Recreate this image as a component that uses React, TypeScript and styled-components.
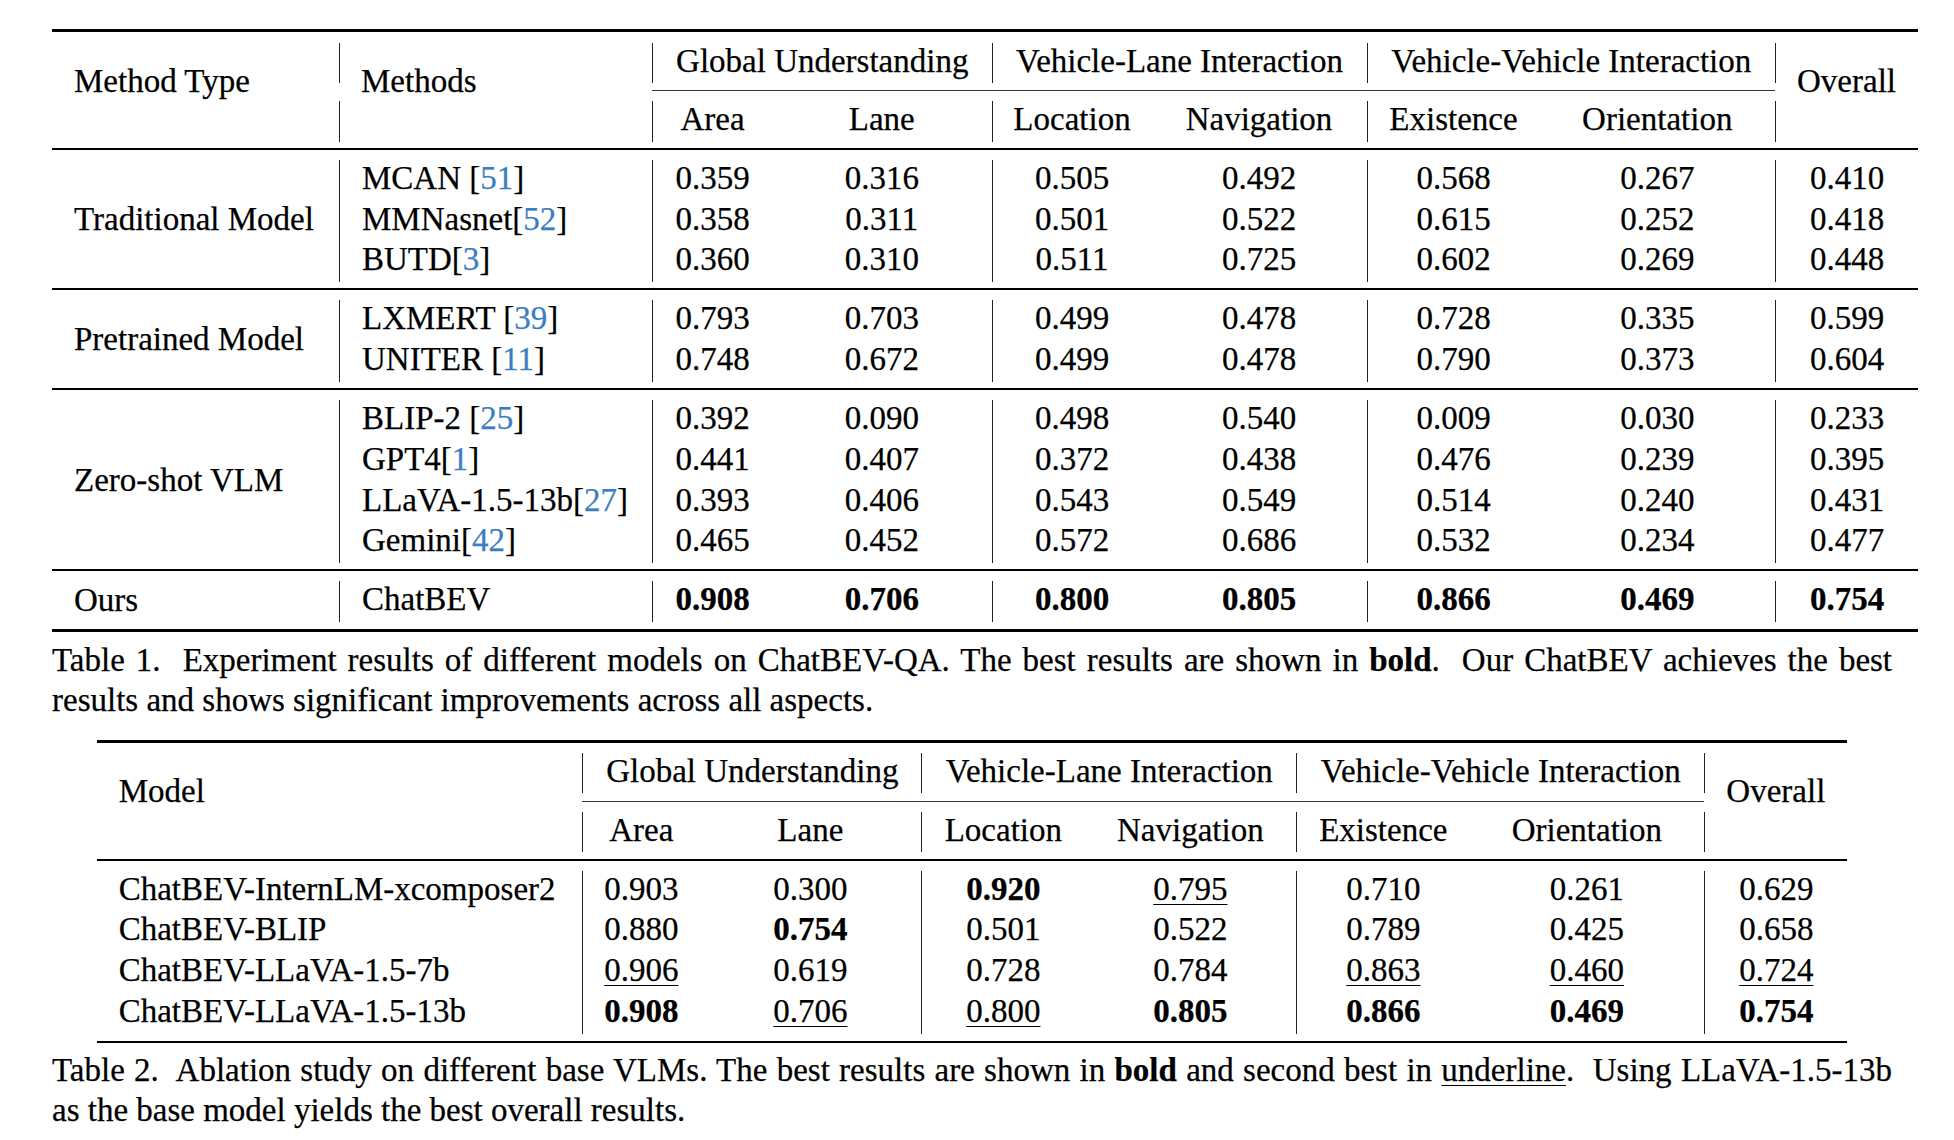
import React from 'react'
import styled, { createGlobalStyle } from 'styled-components'

const GlobalStyle = createGlobalStyle`
  html, body {
    margin: 0;
    padding: 0;
    background: #fff;
  }
  body {
    font-family: 'Liberation Serif', 'Times New Roman', Times, serif;
    font-size: 33px;
    color: #000;
    -webkit-text-stroke: 0.25px currentColor;
  }
`

const Page = styled.div`
  width: 1954px;
  box-sizing: border-box;
  padding: 29.3px 0 0 52px;
`

const TextColumn = styled.div`
  width: 1840px;
  display: flex;
  flex-direction: column;
`

const TableBox = styled.div<{ $width: number; $centered?: boolean; $gap: number }>`
  width: ${p => p.$width}px;
  display: flex;
  flex-direction: column;
  margin-top: ${p => p.$gap}px;
  align-self: ${p => (p.$centered ? 'center' : 'flex-start')};
`

const Rule = styled.div<{ $kind: 'top' | 'mid' | 'bottom' }>`
  height: ${p => (p.$kind === 'mid' ? 2 : 2.7)}px;
  background: #000;
  margin-top: ${p => (p.$kind === 'top' ? 0 : p.$kind === 'mid' ? 6.2 : 7)}px;
  margin-bottom: ${p => (p.$kind === 'top' ? 10.7 : p.$kind === 'mid' ? 10.2 : 0)}px;
`

const Grid = styled.div<{ $cols: number[]; $rows: string }>`
  display: grid;
  grid-template-columns: ${p => p.$cols.map(c => `${c}px`).join(' ')};
  grid-template-rows: ${p => p.$rows};
`

const Cell = styled.div<{ $col: string; $row: string; $bar?: boolean; $left?: boolean }>`
  grid-column: ${p => p.$col};
  grid-row: ${p => p.$row};
  border-left: ${p => (p.$bar ? '1px solid #222' : 'none')};
  text-align: ${p => (p.$left ? 'left' : 'center')};
  padding-left: ${p => (p.$left ? '22px' : '0')};
  line-height: 36px;
  white-space: nowrap;
`

const SpanLabel = styled.div<{ $col: string; $row: string; $head?: boolean; $left?: boolean }>`
  grid-column: ${p => p.$col};
  grid-row: ${p => p.$row};
  align-self: ${p => (p.$head ? 'start' : 'center')};
  padding-top: ${p => (p.$head ? '20px' : '0')};
  margin-bottom: ${p => (p.$head ? '0' : '4px')};
  text-align: ${p => (p.$left ? 'left' : 'center')};
  padding-left: ${p => (p.$left ? '22px' : '0')};
  line-height: 36px;
  white-space: nowrap;
`

const CmidLine = styled.div<{ $col: string }>`
  grid-column: ${p => p.$col};
  grid-row: 2;
  align-self: start;
  margin-top: 7.2px;
  height: 1.2px;
  background: #333;
`

const Bold = styled.b`
  font-weight: 700;
`

const Under = styled.span`
  text-decoration: underline;
  text-decoration-thickness: 1.3px;
  text-underline-offset: 4px;
`

const Cite = styled.span`
  color: #3a7ebf;
`

const Caption = styled.div<{ $gap: number }>`
  width: 1840px;
  margin-top: ${p => p.$gap}px;
  line-height: 40px;
`

const CaptionLine = styled.div<{ $fill?: boolean }>`
  text-align: ${p => (p.$fill ? 'justify' : 'left')};
  text-align-last: ${p => (p.$fill ? 'justify' : 'auto')};
`

type Group = { title: string; subs: [string, string] }

type TableSpec = {
  widths: number[]
  leads: string[]
  groups: Group[]
  bars: number[]
}

type BodyGroup = { label?: string; rows: string[][] }

const groups: Group[] = [
  { title: 'Global Understanding', subs: ['Area', 'Lane'] },
  { title: 'Vehicle-Lane Interaction', subs: ['Location', 'Navigation'] },
  { title: 'Vehicle-Vehicle Interaction', subs: ['Existence', 'Orientation'] },
]

const table1: TableSpec = {
  widths: [287, 313, 120, 219.5, 160, 215, 173, 235.5, 143],
  leads: ['Method Type', 'Methods'],
  groups,
  bars: [2, 3, 5, 7, 9],
}

const table2: TableSpec = {
  widths: [485.7, 117, 222, 163, 212, 173, 235, 143],
  leads: ['Model'],
  groups,
  bars: [2, 4, 6, 8],
}

const body1: BodyGroup[] = [
  {
    label: 'Traditional Model',
    rows: [
      ['MCAN [51]', '0.359', '0.316', '0.505', '0.492', '0.568', '0.267', '0.410'],
      ['MMNasnet[52]', '0.358', '0.311', '0.501', '0.522', '0.615', '0.252', '0.418'],
      ['BUTD[3]', '0.360', '0.310', '0.511', '0.725', '0.602', '0.269', '0.448'],
    ],
  },
  {
    label: 'Pretrained Model',
    rows: [
      ['LXMERT [39]', '0.793', '0.703', '0.499', '0.478', '0.728', '0.335', '0.599'],
      ['UNITER [11]', '0.748', '0.672', '0.499', '0.478', '0.790', '0.373', '0.604'],
    ],
  },
  {
    label: 'Zero-shot VLM',
    rows: [
      ['BLIP-2 [25]', '0.392', '0.090', '0.498', '0.540', '0.009', '0.030', '0.233'],
      ['GPT4[1]', '0.441', '0.407', '0.372', '0.438', '0.476', '0.239', '0.395'],
      ['LLaVA-1.5-13b[27]', '0.393', '0.406', '0.543', '0.549', '0.514', '0.240', '0.431'],
      ['Gemini[42]', '0.465', '0.452', '0.572', '0.686', '0.532', '0.234', '0.477'],
    ],
  },
  {
    label: 'Ours',
    rows: [['ChatBEV', '**0.908**', '**0.706**', '**0.800**', '**0.805**', '**0.866**', '**0.469**', '**0.754**']],
  },
]

const body2: BodyGroup[] = [
  {
    rows: [
      ['ChatBEV-InternLM-xcomposer2', '0.903', '0.300', '**0.920**', '_0.795_', '0.710', '0.261', '0.629'],
      ['ChatBEV-BLIP', '0.880', '**0.754**', '0.501', '0.522', '0.789', '0.425', '0.658'],
      ['ChatBEV-LLaVA-1.5-7b', '_0.906_', '0.619', '0.728', '0.784', '_0.863_', '_0.460_', '_0.724_'],
      ['ChatBEV-LLaVA-1.5-13b', '**0.908**', '_0.706_', '_0.800_', '**0.805**', '**0.866**', '**0.469**', '**0.754**'],
    ],
  },
]

// "**x**" bold, "_x_" underline, "Name [12]" citation in blue
const renderText = (s: string) => {
  if (s.startsWith('**')) return <Bold>{s.slice(2, -2)}</Bold>
  if (s.startsWith('_')) return <Under>{s.slice(1, -1)}</Under>
  const m = s.match(/^(.*)\[(\d+)\]$/)
  if (m) {
    return (
      <>
        {m[1]}[<Cite>{m[2]}</Cite>]
      </>
    )
  }
  return s
}

const Header = ({ spec }: { spec: TableSpec }) => {
  const n = spec.widths.length
  const lead = spec.leads.length
  const items: React.ReactNode[] = []

  spec.leads.forEach((label, i) => {
    const c = i + 1
    if (spec.bars.includes(c)) {
      items.push(<Cell key={`b1-${c}`} $col={`${c}`} $row="1" $bar />)
      items.push(<Cell key={`b3-${c}`} $col={`${c}`} $row="3" $bar />)
    }
    items.push(
      <SpanLabel key={`lead-${c}`} $col={`${c}`} $row="1 / 4" $head $left>
        {label}
      </SpanLabel>
    )
  })

  spec.groups.forEach((g, gi) => {
    const c = lead + 1 + gi * 2
    items.push(
      <Cell key={`g-${gi}`} $col={`${c} / span 2`} $row="1" $bar>
        {g.title}
      </Cell>
    )
    items.push(
      <Cell key={`s0-${gi}`} $col={`${c}`} $row="3" $bar>
        {g.subs[0]}
      </Cell>
    )
    items.push(
      <Cell key={`s1-${gi}`} $col={`${c + 1}`} $row="3">
        {g.subs[1]}
      </Cell>
    )
  })

  items.push(<CmidLine key="cmid" $col={`${lead + 1} / ${n}`} />)
  items.push(<Cell key="ob1" $col={`${n}`} $row="1" $bar />)
  items.push(<Cell key="ob3" $col={`${n}`} $row="3" $bar />)
  items.push(
    <SpanLabel key="overall" $col={`${n}`} $row="1 / 4" $head>
      Overall
    </SpanLabel>
  )

  return (
    <Grid $cols={spec.widths} $rows="40px 18.3px 40.7px">
      {items}
    </Grid>
  )
}

const Body = ({ spec, group }: { spec: TableSpec; group: BodyGroup }) => {
  const lead = spec.leads.length
  const first = group.label ? 2 : 1
  return (
    <Grid $cols={spec.widths} $rows={`repeat(${group.rows.length}, 40.7px)`}>
      {group.label && (
        <SpanLabel $col="1" $row="1 / -1" $left>
          {group.label}
        </SpanLabel>
      )}
      {group.rows.map((row, ri) =>
        row.map((value, ci) => {
          const c = first + ci
          return (
            <Cell
              key={`${ri}-${ci}`}
              $col={`${c}`}
              $row={`${ri + 1}`}
              $bar={spec.bars.includes(c)}
              $left={c <= lead}
            >
              {renderText(value)}
            </Cell>
          )
        })
      )}
    </Grid>
  )
}

const ResultTable = ({
  spec,
  body,
  gap,
  centered,
}: {
  spec: TableSpec
  body: BodyGroup[]
  gap: number
  centered?: boolean
}) => {
  const width = spec.widths.reduce((a, b) => a + b, 0)
  return (
    <TableBox $width={width} $gap={gap} $centered={centered}>
      <Rule $kind="top" />
      <Header spec={spec} />
      {body.map((g, i) => (
        <React.Fragment key={i}>
          <Rule $kind="mid" />
          <Body spec={spec} group={g} />
        </React.Fragment>
      ))}
      <Rule $kind="bottom" />
    </TableBox>
  )
}

const App = () => {
  return (
    <Page>
      <GlobalStyle />
      <TextColumn>
        <ResultTable spec={table1} body={body1} gap={0} />
        <Caption $gap={8.5}>
          <CaptionLine $fill>
            Table 1.{'\u00a0'} Experiment results of different models on ChatBEV-QA. The best results are shown in{' '}
            <Bold>bold</Bold>.{'\u00a0'} Our ChatBEV achieves the best
          </CaptionLine>
          <CaptionLine>results and shows significant improvements across all aspects.</CaptionLine>
        </Caption>
        <ResultTable spec={table2} body={body2} gap={19.8} centered />
        <Caption $gap={7}>
          <CaptionLine $fill>
            Table 2.{'\u00a0'} Ablation study on different base VLMs. The best results are shown in <Bold>bold</Bold> and
            second best in <Under>underline</Under>.{'\u00a0'} Using LLaVA-1.5-13b
          </CaptionLine>
          <CaptionLine>as the base model yields the best overall results.</CaptionLine>
        </Caption>
      </TextColumn>
    </Page>
  )
}

export default App
